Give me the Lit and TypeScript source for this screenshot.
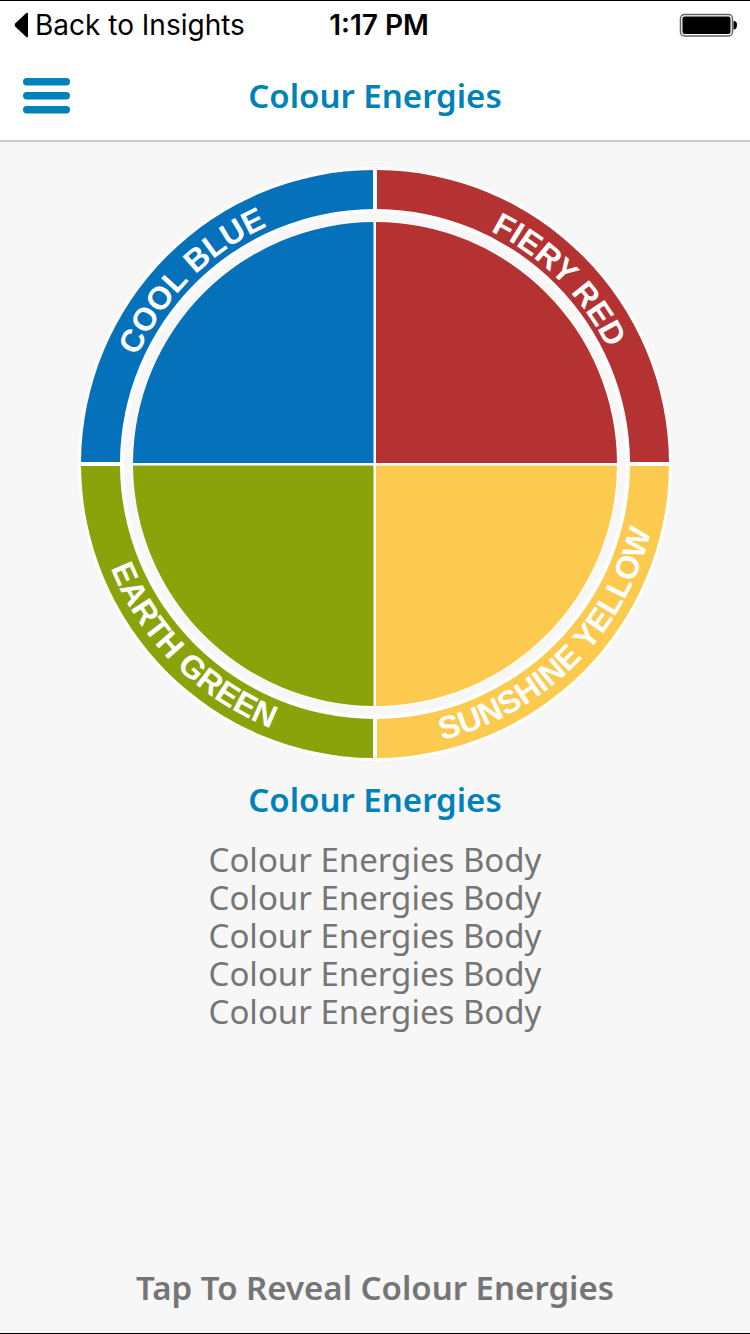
import { LitElement, html, svg, css } from "lit";
import { customElement } from "lit/decorators.js";

interface Energy {
  id: string;
  label: string;
  color: string;
  ring: string;
  slice: string;
  arc: string;
}

// Geometry is in a 600-unit square, centred on the origin.
const ENERGIES: Energy[] = [
  {
    id: "blue",
    label: "COOL BLUE",
    color: "#0571bb",
    ring: "M-294-2A294 294 0 0 1-2-294V-255A255 255 0 0 0-255-2Z",
    slice: "M-1.500-1V-242A242 242 0 0 0-242-1Z",
    arc: "M-261 0A261 261 0 0 1 0-261",
  },
  {
    id: "red",
    label: "FIERY RED",
    color: "#b53233",
    ring: "M2-294A294 294 0 0 1 294-2H255A255 255 0 0 0 2-255Z",
    slice: "M1-1V-242A242 242 0 0 1 242-1Z",
    arc: "M0-260A260 260 0 0 1 260 0",
  },
  {
    id: "green",
    label: "EARTH GREEN",
    color: "#8aa30b",
    ring: "M-294 2A294 294 0 0 0-2 294V255A255 255 0 0 1-255 2Z",
    slice: "M-1.500 1.500V242A242 242 0 0 1-242 1.500Z",
    arc: "M-284 0A284 284 0 0 0 0 284",
  },
  {
    id: "yellow",
    label: "SUNSHINE YELLOW",
    color: "#fbca4f",
    ring: "M2 294A294 294 0 0 0 294 2H255A255 255 0 0 1 2 255Z",
    slice: "M1 1.500V242A242 242 0 0 0 242 1.500Z",
    arc: "M0 284A284 284 0 0 0 284 0",
  },
];

@customElement("status-bar")
export class StatusBar extends LitElement {
  static styles = css`
    :host {
      display: grid;
      grid-template-columns: 1fr auto 1fr;
      align-items: center;
      height: 48px;
      padding: 0 12px 0 14px;
      color: #000;
      font: 400 28px/32px Inter, sans-serif;
    }
    .back {
      display: flex;
      align-items: center;
      gap: 7px;
      color: inherit;
      text-decoration: none;
      white-space: nowrap;
    }
    .time {
      padding-left: 6px;
      font-weight: 600;
    }
    .battery {
      justify-self: end;
      display: block;
    }
  `;

  render() {
    return html`
      <a class="back" href="#insights">
        <svg width="14" height="26" viewBox="0 0 14 26" aria-hidden="true">
          <path d="M1.2 11.6 12 1.3Q14 0 14 2V24Q14 26 12 24.7L1.2 14.4Q0 13 1.2 11.6Z" />
        </svg>
        <span>Back to Insights</span>
      </a>
      <span class="time">1:17 PM</span>
      <svg class="battery" width="59" height="24" viewBox="0 0 59 24" role="img" aria-label="Battery full">
        <rect x="1.500" y="1.500" width="52" height="21.500" rx="4" fill="#fff" stroke="#666" stroke-width="1.500" />
        <rect x="3.500" y="3.500" width="48" height="17.500" rx="2" />
        <path d="M54.5 8C57 8 58 9.500 58 12S57 16.500 54.500 16.500Z" />
      </svg>
    `;
  }
}

@customElement("nav-header")
export class NavHeader extends LitElement {
  static styles = css`
    :host {
      display: grid;
      grid-template-columns: 1fr auto 1fr;
      align-items: center;
      height: 93px;
      padding: 2px 23px 0;
      border-bottom: 2px solid #ccc;
      box-sizing: border-box;
      color: #0082b9;
    }
    .menu {
      justify-self: start;
      display: block;
      padding: 0;
      border: 0;
      background: none;
      color: inherit;
    }
    .icon {
      display: block;
    }
    .title {
      margin: 0;
      font: 600 33px/40px "Noto Sans", sans-serif;
    }
  `;

  render() {
    return html`
      <button class="menu" type="button" aria-label="Menu">
        <svg class="icon" width="47" height="36" viewBox="0 0 47 36" fill="currentColor">
          <rect width="47" height="7.500" rx="3.700" />
          <rect y="14" width="47" height="7.500" rx="3.700" />
          <rect y="28" width="47" height="7.500" rx="3.700" />
        </svg>
      </button>
      <h1 class="title">Colour Energies</h1>
    `;
  }
}

@customElement("energy-wheel")
export class EnergyWheel extends LitElement {
  static styles = css`
    :host {
      display: block;
    }
    .wheel {
      display: block;
      width: 100%;
    }
    .label {
      fill: #fff;
      font: 700 32px "Liberation Sans", Arial, sans-serif;
      text-anchor: middle;
    }
  `;

  render() {
    return html`
      <svg class="wheel" viewBox="-300 -300 600 600">
        <circle r="297" fill="#fff" />
        <circle r="251" fill="#f7f7f7" />
        <circle r="243" fill="#fff" />
        ${ENERGIES.map(
          (e) => svg`
            <path d=${e.ring} fill=${e.color} />
            <path d=${e.slice} fill=${e.color} />
            <path id=${e.id} d=${e.arc} fill="none" />
            <text class="label"><textPath href="#${e.id}" startOffset="50%">${e.label}</textPath></text>
          `
        )}
      </svg>
    `;
  }
}

@customElement("app-root")
export class AppRoot extends LitElement {
  static styles = css`
    :host {
      display: flex;
      flex-direction: column;
      min-height: 100vh;
      box-sizing: border-box;
      border-top: 1px solid #000;
      border-bottom: 1px solid #000;
      background: #f7f7f7;
      color: #757575;
      font-family: "Noto Sans", sans-serif;
    }
    .top {
      background: #fff;
    }
    .content {
      flex: 1;
      display: flex;
      flex-direction: column;
      align-items: center;
      padding: 22px 24px 25px;
      text-align: center;
    }
    .wheel {
      width: 100%;
      max-width: 600px;
    }
    .heading {
      margin: 16px 0 21px;
      color: #0082b9;
      font-size: 33px;
      line-height: 40px;
      font-weight: 600;
    }
    .body {
      margin: 0;
      font-size: 33px;
      line-height: 38px;
    }
    .reveal {
      margin: auto 0 0;
      padding: 0;
      border: 0;
      background: none;
      color: inherit;
      font: 600 33px/40px "Noto Sans", sans-serif;
    }
  `;

  private lines = Array.from({ length: 5 }, () => "Colour Energies Body");

  render() {
    return html`
      <header class="top">
        <status-bar></status-bar>
        <nav-header></nav-header>
      </header>
      <main class="content">
        <energy-wheel class="wheel"></energy-wheel>
        <h2 class="heading">Colour Energies</h2>
        <p class="body">${this.lines.map((l, i) => (i ? html`<br />${l}` : l))}</p>
        <button class="reveal" type="button">Tap To Reveal Colour Energies</button>
      </main>
    `;
  }
}
